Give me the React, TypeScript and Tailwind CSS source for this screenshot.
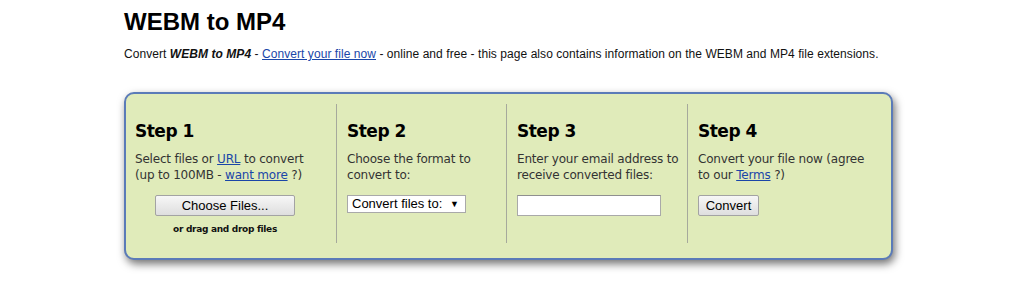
const linkCls = "text-[#1a46a8] underline";

const StepHeading = ({ children }: { children: string }) => (
    <h2 className="text-[17px] leading-[20px] font-bold text-black tracking-[-0.5px]">{children}</h2>
);

const StepText = ({ children }: { children: React.ReactNode }) => (
    <p className="mt-[10px] text-[12px] leading-[16px] text-[#333] tracking-[-0.2px]">{children}</p>
);

const App = () => {
    return (
        <div className="min-h-[291px] bg-white">
            <div className="w-[776px] mx-auto pt-[8px] font-['Liberation_Sans',Arial,sans-serif] text-black">
                <h1 className="text-[24px] leading-[28px] font-bold">WEBM to MP4</h1>
                <p className="mt-[10px] text-[12px] leading-[16px] text-[#111] tracking-[0.06px]">
                    Convert <b><i>WEBM to MP4</i></b> - <a href="#" className={linkCls}>Convert your file now</a> - online and free - this page also contains information on the WEBM and MP4 file extensions.
                </p>

                <div className="mt-[30px] w-[769px] h-[168px] flex border-2 border-[#5b7bb8] rounded-[10px] bg-[#e0ebba] pt-[10px] pb-[15px] shadow-[2px_4px_8px_rgba(0,0,0,0.55)] font-['DejaVu_Sans',Verdana,sans-serif]">
                    {/* Step 1 */}
                    <div className="w-[210px] pl-[9px] pr-[21px] pt-[17px]">
                        <StepHeading>Step 1</StepHeading>
                        <StepText>
                            Select files or <a href="#" className={linkCls}>URL</a> to convert (up to 100MB - <a href="#" className={linkCls}>want more</a> ?)
                        </StepText>
                        <div className="w-[180px] mt-[12px] flex flex-col items-center">
                            <button className="w-[140px] h-[21px] border border-[#a3a3a3] rounded-[2px] bg-gradient-to-b from-[#f7f7f7] to-[#dedede] text-[13px] leading-[19px] text-black font-['Liberation_Sans',Arial,sans-serif]">
                                Choose Files...
                            </button>
                            <span className="mt-[7px] text-[9px] leading-[12px] font-bold tracking-[-0.3px] text-[#111]">or drag and drop files</span>
                        </div>
                    </div>

                    {/* Step 2 */}
                    <div className="w-[170px] border-l border-[#a6a99c] pl-[10px] pt-[17px]">
                        <StepHeading>Step 2</StepHeading>
                        <StepText>Choose the format to convert to:</StepText>
                        <div className="mt-[12px] w-[119px] h-[18px] bg-white border border-[#a9a9a9] flex items-center justify-between pl-[4px] pr-[6px] font-['Liberation_Sans',Arial,sans-serif]">
                            <span className="text-[13px] leading-[16px] text-black">Convert files to:</span>
                            <span className="text-[9px] leading-[10px] text-black">▼</span>
                        </div>
                    </div>

                    {/* Step 3 */}
                    <div className="w-[181px] border-l border-[#a6a99c] pl-[10px] pt-[17px]">
                        <StepHeading>Step 3</StepHeading>
                        <StepText>Enter your email address to receive converted files:</StepText>
                        <input
                            type="text"
                            className="mt-[12px] block w-[144px] h-[21px] bg-white border border-[#a9a9a9] border-t-[#8f8f8f] outline-none"
                        />
                    </div>

                    {/* Step 4 */}
                    <div className="flex-1 border-l border-[#a6a99c] pl-[10px] pr-[22px] pt-[17px]">
                        <StepHeading>Step 4</StepHeading>
                        <StepText>
                            Convert your file now (agree to our <a href="#" className={linkCls}>Terms</a> ?)
                        </StepText>
                        <button className="mt-[12px] block w-[61px] h-[21px] border border-[#a3a3a3] rounded-[2px] bg-gradient-to-b from-[#f7f7f7] to-[#dedede] text-[13px] leading-[19px] text-black font-['Liberation_Sans',Arial,sans-serif]">
                            Convert
                        </button>
                    </div>
                </div>
            </div>
        </div>
    );
};

export default App;
